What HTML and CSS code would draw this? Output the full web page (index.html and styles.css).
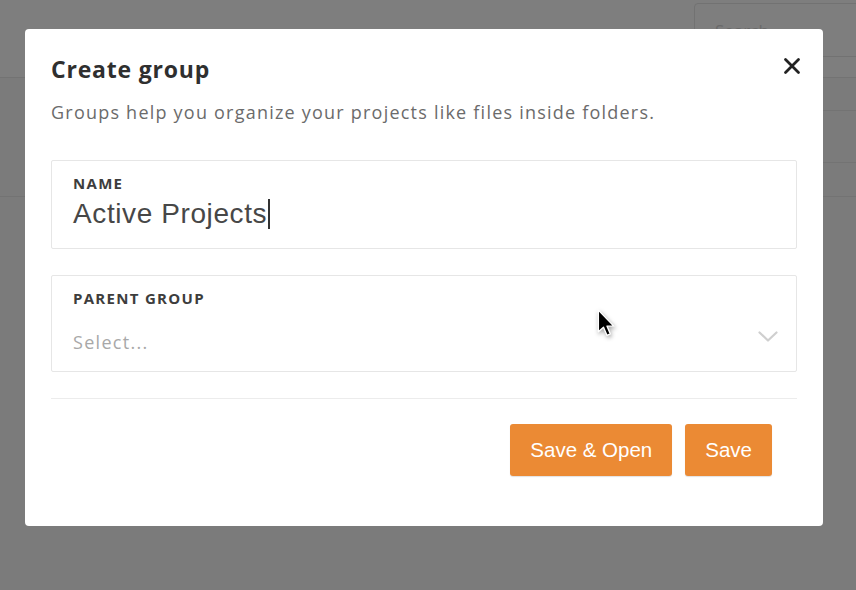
FILE: index.html
```html
<!DOCTYPE html>
<html>
<head>
<meta charset="utf-8">
<link rel="stylesheet" href="styles.css">
</head>
<body>
<div class="page">
  <div class="topbar">
    <div class="search">Search</div>
  </div>
  <div class="content">
    <div class="main"><div class="row"></div></div>
    <div class="side">
      <div class="srow a"></div>
      <div class="srow b"></div>
      <div class="srow c"></div>
    </div>
  </div>
</div>

<div class="modal">
  <div class="modal-head">
    <h1 class="title">Create group</h1>
    <svg class="close" width="18" height="18" viewBox="0 0 18 18"><path d="M2.5 2.5 L15.5 15.5 M15.5 2.5 L2.5 15.5" stroke="#222" stroke-width="2.8" stroke-linecap="round"/></svg>
  </div>
  <p class="subtitle">Groups help you organize your projects like files inside folders.</p>

  <div class="field">
    <div class="label">NAME</div>
    <div class="value">Active Projects<span class="caret"></span></div>
  </div>

  <div class="field parent">
    <div class="label">PARENT GROUP</div>
    <div class="select-row">
      <span class="placeholder">Select...</span>
      <svg class="chev" width="20" height="11" viewBox="0 0 20 11"><path d="M1.5 1.5 L10 9.5 L18.5 1.5" fill="none" stroke="#cfcfcf" stroke-width="2.2" stroke-linecap="round" stroke-linejoin="round"/></svg>
    </div>
  </div>

  <div class="divider"></div>

  <div class="actions">
    <button class="btn">Save &amp; Open</button>
    <button class="btn">Save</button>
  </div>
</div>

<svg class="cursor" width="23" height="32" viewBox="0 0 20 28">
  <path d="M2 1 L2 20 L6.5 16 L9.5 23 L12.5 21.8 L9.6 15 L15.5 15 Z" fill="#000" stroke="#fff" stroke-width="1.2" stroke-linejoin="round"/>
</svg>
</body>
</html>
```

FILE: styles.css
```css
* { box-sizing: border-box; }
html, body { margin: 0; padding: 0; }
body {
  width: 856px;
  height: 590px;
  overflow: hidden;
  background: #7b7b7b;
  font-family: "Open Sans", "Lato", sans-serif;
  position: relative;
}

.page { width: 856px; height: 590px; }
.topbar {
  height: 78px;
  background: #7e7e7e;
  border-bottom: 1px solid #737373;
  display: flex;
  justify-content: flex-end;
  padding-top: 3px;
}
.search {
  width: 180px;
  height: 54px;
  margin-right: -18px;
  border: 1px solid #727272;
  border-radius: 4px;
  color: #6a6a6a;
  font-size: 17px;
  padding: 15px 0 0 20px;
}
.content { display: flex; }
.main { flex: 1; }
.main .row { height: 119px; border-bottom: 1px solid #737373; }
.side { width: 300px; }
.srow { border-bottom: 1px solid #737373; }
.srow.a { height: 33px; }
.srow.b { height: 52px; }
.srow.c { height: 34px; }

.modal {
  position: absolute;
  left: 25px;
  top: 29px;
  width: 798px;
  height: 497px;
  background: #fff;
  border-radius: 4px;
  padding: 25px 26px 0 26px;
  color: #333;
}
.modal-head {
  display: flex;
  justify-content: space-between;
  align-items: center;
}
.title {
  margin: 0;
  font-size: 23px;
  line-height: 30px;
  font-weight: 700;
  color: #2f2f2f;
  letter-spacing: 0.8px;
}
.close { margin-right: -4px; margin-top: -6px; }
.subtitle {
  margin: 16px 0 0 0;
  font-size: 18px;
  line-height: 24px;
  color: #6b6b6b;
  letter-spacing: 1.22px;
}

.field {
  margin-top: 36px;
  border: 1px solid #e6e6e6;
  border-radius: 2px;
  padding: 14px 20px 19px 21px;
}
.label {
  font-size: 15px;
  line-height: 16px;
  font-weight: 700;
  color: #3d3d3d;
  letter-spacing: 1.3px;
}
.value {
  margin-top: 8px;
  font-family: "Liberation Sans", Arial, sans-serif;
  font-size: 28px;
  line-height: 30px;
  color: #474747;
  letter-spacing: 0.6px;
  display: flex;
  align-items: center;
}
.caret {
  display: inline-block;
  width: 1.5px;
  height: 30px;
  background: #333;
  margin-left: 1px;
}
.field.parent { margin-top: 26px; padding-bottom: 17px; }
.select-row {
  margin-top: 24px;
  display: flex;
  justify-content: space-between;
  align-items: center;
  height: 24px;
}
.placeholder {
  font-size: 18px;
  line-height: 24px;
  color: #a8a8a8;
  letter-spacing: 1.3px;
}
.chev { margin-top: -12px; margin-right: -2px; }

.divider {
  margin-top: 26px;
  height: 1px;
  background: #ececec;
}
.actions {
  margin-top: 25px;
  display: flex;
  justify-content: flex-end;
  gap: 13px;
  padding-right: 25px;
}
.btn {
  height: 52px;
  border: none;
  border-radius: 3px;
  background: #eb8a34;
  color: #fff;
  font-family: "Liberation Sans", Arial, sans-serif;
  font-size: 20.5px;
  padding: 0 20px;
  box-shadow: 0 1px 1px rgba(0,0,0,0.12);
}

.cursor {
  position: absolute;
  left: 596px;
  top: 309px;
  filter: drop-shadow(1px 2px 2px rgba(0,0,0,0.35));
}
```
